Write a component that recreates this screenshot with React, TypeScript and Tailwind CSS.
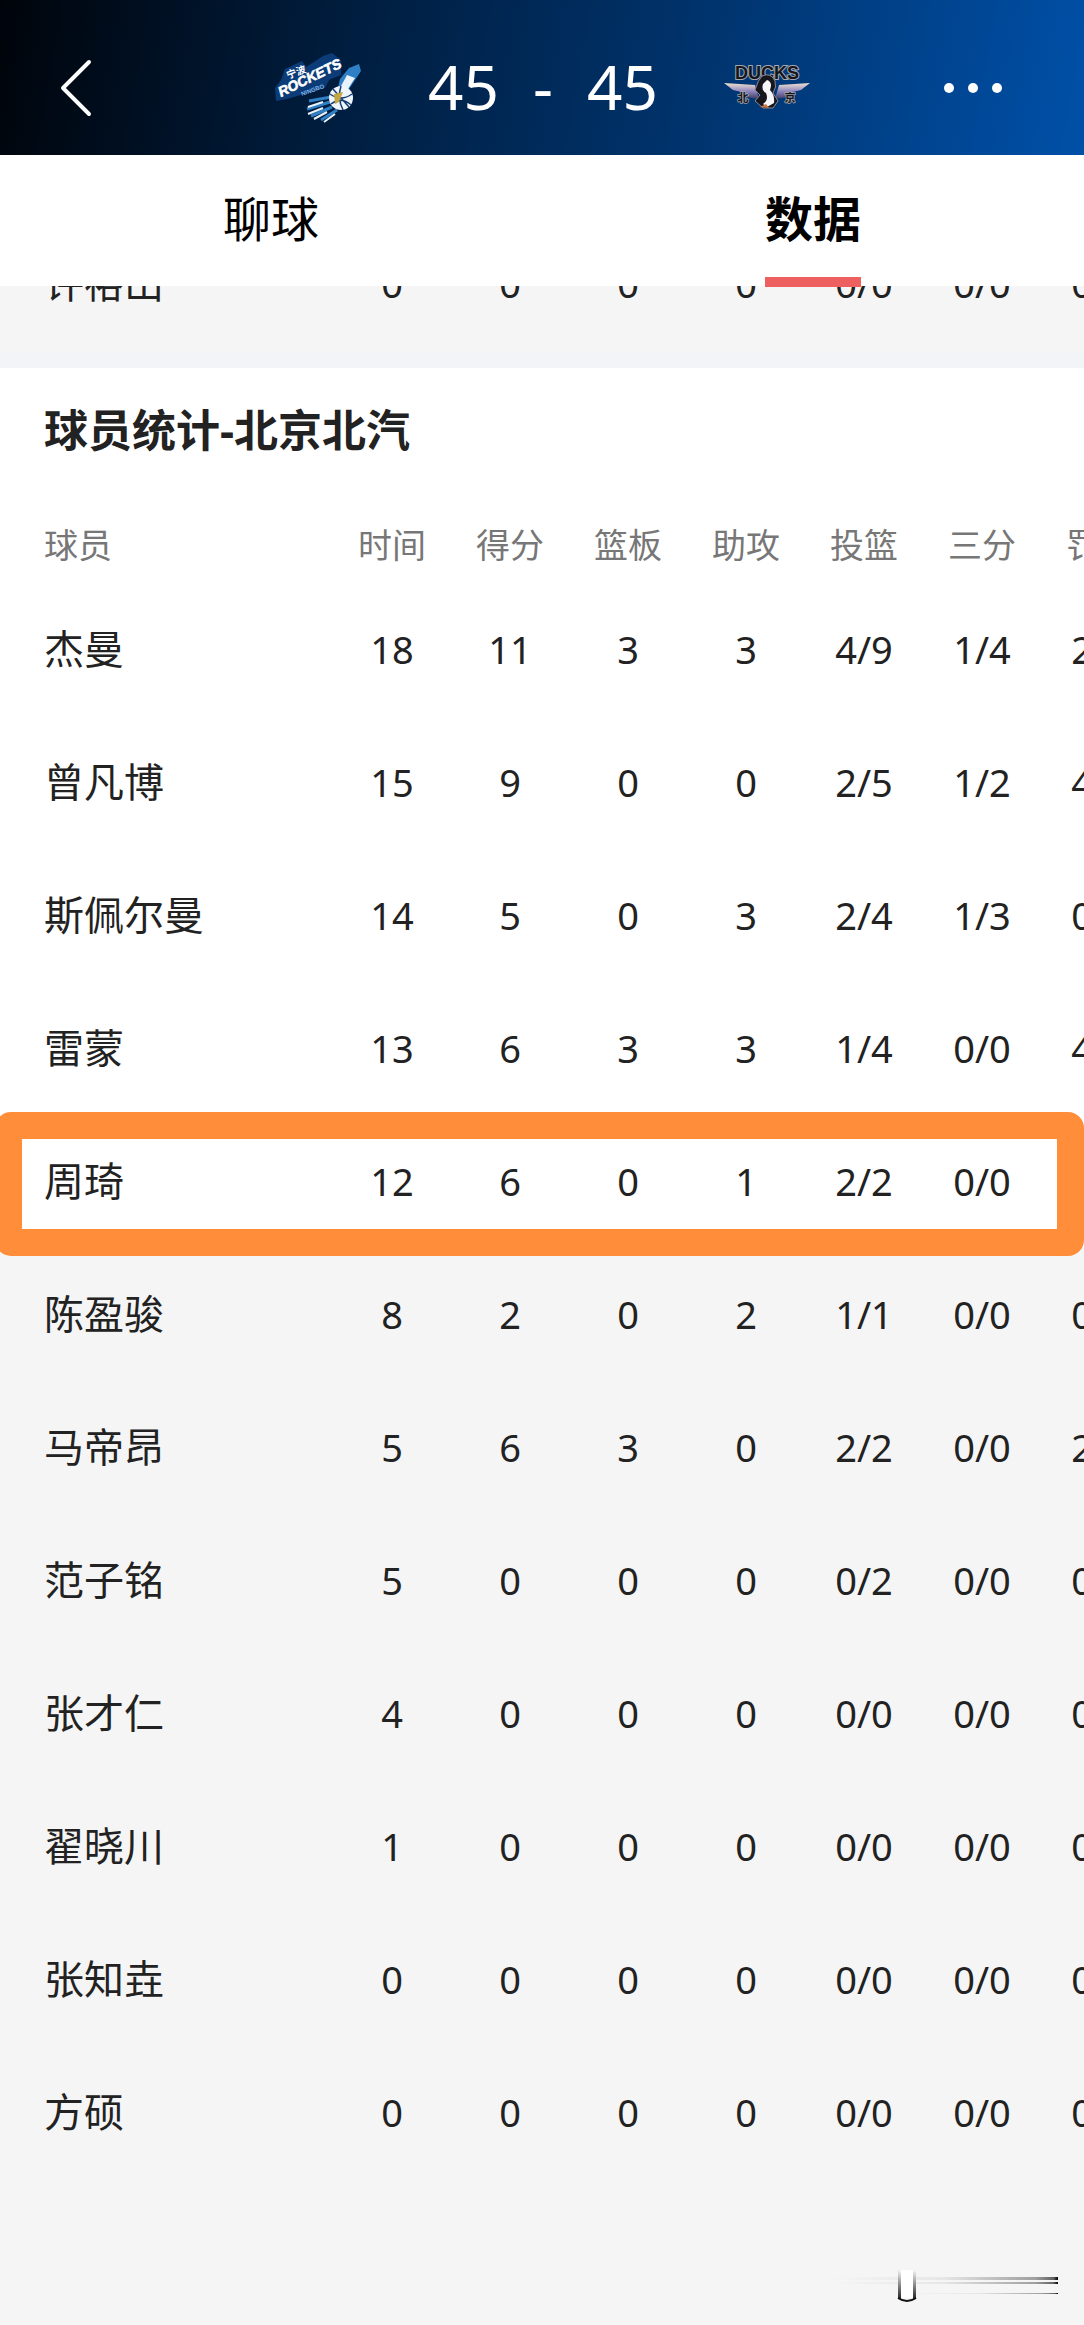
import { ChevronLeft } from "lucide-react";
import clsx from "clsx";

type Player = { name: string; stats: string[] };

const columns = ["时间", "得分", "篮板", "助攻", "投篮", "三分", "罚球"];

const previousTeam: Player[] = [
  { name: "许裕山", stats: ["0", "0", "0", "0", "0/0", "0/0", "0/0"] },
];

const players: Player[] = [
  { name: "杰曼", stats: ["18", "11", "3", "3", "4/9", "1/4", "2/2"] },
  { name: "曾凡博", stats: ["15", "9", "0", "0", "2/5", "1/2", "4/4"] },
  { name: "斯佩尔曼", stats: ["14", "5", "0", "3", "2/4", "1/3", "0/0"] },
  { name: "雷蒙", stats: ["13", "6", "3", "3", "1/4", "0/0", "4/4"] },
  { name: "周琦", stats: ["12", "6", "0", "1", "2/2", "0/0", "2/2"] },
  { name: "陈盈骏", stats: ["8", "2", "0", "2", "1/1", "0/0", "0/0"] },
  { name: "马帝昂", stats: ["5", "6", "3", "0", "2/2", "0/0", "2/2"] },
  { name: "范子铭", stats: ["5", "0", "0", "0", "0/2", "0/0", "0/0"] },
  { name: "张才仁", stats: ["4", "0", "0", "0", "0/0", "0/0", "0/0"] },
  { name: "翟晓川", stats: ["1", "0", "0", "0", "0/0", "0/0", "0/0"] },
  { name: "张知垚", stats: ["0", "0", "0", "0", "0/0", "0/0", "0/0"] },
  { name: "方硕", stats: ["0", "0", "0", "0", "0/0", "0/0", "0/0"] },
];

const STARTERS = 5;

function RocketsLogo() {
  return (
    <svg viewBox="0 0 90 72" className="h-18 w-[90px] overflow-visible" role="img" aria-label="宁波火箭">
      <path d="M2 36 L8 28 L12 17 L29 9 L33 15 L50 4 L59 1 L68 8 L68 23 L56 28 L52 36 L14 47 L3 49 Z" fill="#0b3c78" />
      <path d="M76 16 L86 12 L88 19 L76 37 L64 41 L67 27 Z" fill="#2f7fc6" />
      <path d="M74 23 L82 26 L75 37 L67 36 Z" fill="#e8f2fb" />
      <g stroke="#2f7fc6" strokeWidth="3">
        <path d="M58 45 L36 49 M57 50 L34 57 M59 55 L38 64 M64 58 L48 68" />
      </g>
      <g stroke="#e8f2fb" strokeWidth="2">
        <path d="M50 50 L35 55 M50 56 L35 62 M54 60 L41 67 M62 62 L51 70" />
      </g>
      <circle cx="68" cy="46" r="12" fill="#eef5fb" />
      <path d="M57 42 Q68 50 79 42 M58 52 Q68 44 78 53 M68 34 Q64 46 70 58 M60 37 Q68 46 76 55" fill="none" stroke="#123c73" strokeWidth="1.5" />
      <path d="M61 42 L70 40 L66 50 L62 52 Z" fill="#c3a544" />
      <text transform="translate(8 45) rotate(-26)" fontSize="14" fontWeight="700" fontStyle="italic" fill="#ffffff" stroke="#ffffff" strokeWidth="0.6" className="font-['Liberation_Sans',sans-serif]">ROCKETS</text>
      <text transform="translate(15 27) rotate(-20)" fontSize="10" fontWeight="700" fill="#ffffff" className="font-['Noto_Sans_CJK_SC',sans-serif]">宁波</text>
      <text transform="translate(29 44) rotate(-20)" fontSize="6" fontWeight="700" fill="#7fb2e4" className="font-['Liberation_Sans',sans-serif]">NINGBO</text>
    </svg>
  );
}

function DucksLogo() {
  return (
    <svg viewBox="0 0 88 50" className="h-[50px] w-22" role="img" aria-label="北京">
      <defs>
        <linearGradient id="wing" x1="0" y1="0" x2="0" y2="1">
          <stop offset="0" stopColor="#f1e3cf" />
          <stop offset="0.5" stopColor="#9188c0" />
          <stop offset="1" stopColor="#3d3a63" />
        </linearGradient>
      </defs>
      <path d="M1 20 L32 22 L36 36 L22 34 L18 29 L10 27 Z" fill="url(#wing)" />
      <path d="M87 20 L56 22 L52 36 L66 34 L70 29 L78 27 Z" fill="url(#wing)" />
      <text x="44" y="16" textAnchor="middle" fontSize="18" fontWeight="700" fill="#15161c" stroke="#a4a7ad" strokeWidth="2" paintOrder="stroke" className="font-['Liberation_Sans',sans-serif]">DUCKS</text>
      <path d="M39 13 Q48 9 52 18 Q54 24 50 30 L55 38 L50 45 L40 45 L32 38 L37 32 L32 27 Q35 17 39 13 Z" fill="#16161c" stroke="#8d8794" strokeWidth="1" />
      <path d="M44 17 Q50 19 47 27 Q52 32 51 40 L44 44 L40 41 Q46 37 43 30 Q38 27 40 21 Z" fill="#f6f6f8" />
      <path d="M37 44 L43 41 L46 45 Z" fill="#c9743c" />
      <text x="20" y="39" textAnchor="middle" fontSize="11" fontWeight="700" fill="#15161c" stroke="#a4a7ad" strokeWidth="1.4" paintOrder="stroke" className="font-['Noto_Sans_CJK_SC',sans-serif]">北</text>
      <text x="67" y="39" textAnchor="middle" fontSize="11" fontWeight="700" fill="#15161c" stroke="#a4a7ad" strokeWidth="1.4" paintOrder="stroke" className="font-['Noto_Sans_CJK_SC',sans-serif]">京</text>
    </svg>
  );
}

function PlayerRow({ player, highlighted, bench }: { player: Player; highlighted?: boolean; bench?: boolean }) {
  return (
    <tr className={clsx("h-[133px]", bench ? "bg-[#f5f5f5]" : "bg-white")}>
      <th scope="row" className="relative pl-11 text-left text-[40px] leading-none font-normal">
        {player.name}
        {highlighted && (
          <span className="pointer-events-none absolute -top-0.5 -left-[5px] z-10 h-36 w-[calc(100vw+5px)] rounded-2xl border-27 border-[#ff8d3a]" />
        )}
      </th>
      {player.stats.map((value, i) => (
        <td key={i} className="text-center text-[38px] leading-none">{value}</td>
      ))}
    </tr>
  );
}

function StatsColumns() {
  return (
    <colgroup>
      <col className="w-[333px]" />
      {columns.map((c) => (
        <col key={c} className="w-[118px]" />
      ))}
    </colgroup>
  );
}

export default function App() {
  return (
    <div className="min-h-screen overflow-x-hidden bg-[#f5f5f5] font-['Noto_Sans','Noto_Sans_CJK_SC',sans-serif] text-[#222222]">
      {/* Score bar */}
      <header className="flex h-[155px] items-center bg-linear-[100deg,#00040a_0%,#001c3c_30%,#00326a_62%,#0050a8_100%] pt-5 text-white">
        <button aria-label="返回" className="w-[150px] pl-6">
          <ChevronLeft className="size-26" strokeWidth={0.9} />
        </button>
        <div className="flex flex-1 items-center justify-center gap-[65px]">
          <RocketsLogo />
          <p className="flex gap-[34px] pb-1 text-[62px] leading-none">
            <span>45</span>
            <span>-</span>
            <span>45</span>
          </p>
          <DucksLogo />
        </div>
        <button aria-label="更多" className="flex w-[150px] gap-3.5 pl-2.5">
          <span className="size-2.5 rounded-full bg-white" />
          <span className="size-2.5 rounded-full bg-white" />
          <span className="size-2.5 rounded-full bg-white" />
        </button>
      </header>

      {/* Tabs */}
      <nav className="relative z-10 flex h-[131px] bg-white text-[48px] leading-none text-black">
        <a href="#chat" className="flex flex-1 items-center justify-center pb-1">聊球</a>
        <a href="#stats" aria-current="page" className="relative flex flex-1 items-center justify-center pb-1 font-bold">
          数据
          <span className="absolute -bottom-px h-2.5 w-24 bg-[#ee6060]" />
        </a>
      </nav>

      {/* Tail of the other team's list */}
      <section className="flex h-[82px] flex-col justify-end overflow-hidden border-b-15 border-[#f2f4f7] pb-1">
        <table className="w-[1159px] shrink-0 table-fixed border-collapse">
          <StatsColumns />
          <tbody>
            {previousTeam.map((p) => (
              <PlayerRow key={p.name} player={p} bench />
            ))}
          </tbody>
        </table>
      </section>

      <section className="bg-white">
        <h2 className="flex h-[124px] items-center pl-11 text-[44px] leading-none font-bold">球员统计-北京北汽</h2>
        <table className="w-[1159px] table-fixed border-collapse">
          <StatsColumns />
          <thead>
            <tr className="h-[90px] text-[34px] leading-none text-[#777777]">
              <th scope="col" className="pt-4 pl-11 text-left font-normal">球员</th>
              {columns.map((c) => (
                <th key={c} scope="col" className="pt-4 font-normal">{c}</th>
              ))}
            </tr>
          </thead>
          <tbody>
            {players.map((p, i) => (
              <PlayerRow key={p.name} player={p} highlighted={p.name === "周琦"} bench={i >= STARTERS} />
            ))}
          </tbody>
        </table>
      </section>

      {/* Watermark */}
      <footer className="flex justify-end bg-[#f5f5f5] pt-[90px] pr-6 pb-5">
        <svg viewBox="0 0 230 36" className="h-9 w-[230px]" aria-hidden="true">
          <defs>
            <linearGradient id="streak" x1="0" x2="1">
              <stop offset="0" stopColor="#000" stopOpacity="0" />
              <stop offset="0.5" stopColor="#000" stopOpacity="0.06" />
              <stop offset="0.9" stopColor="#000" stopOpacity="0.35" />
              <stop offset="0.98" stopColor="#000" stopOpacity="0.6" />
              <stop offset="1" stopColor="#000" />
            </linearGradient>
            <linearGradient id="stem" x1="0" y1="0" x2="0" y2="1">
              <stop offset="0" stopColor="#222" stopOpacity="0" />
              <stop offset="1" stopColor="#222" />
            </linearGradient>
          </defs>
          <rect x="0" y="9" width="228" height="3" fill="url(#streak)" />
          <rect x="0" y="14" width="228" height="2" fill="url(#streak)" />
          <rect x="70" y="25" width="158" height="1" fill="url(#streak)" />
          <rect x="69" y="2" width="17" height="28" fill="#fff" />
          <rect x="68" y="1" width="3" height="30" fill="url(#stem)" />
          <rect x="83" y="1" width="3" height="30" fill="url(#stem)" />
          <path d="M68 30 Q77 36 86 30" fill="none" stroke="#111" strokeWidth="2" />
        </svg>
      </footer>
    </div>
  );
}
